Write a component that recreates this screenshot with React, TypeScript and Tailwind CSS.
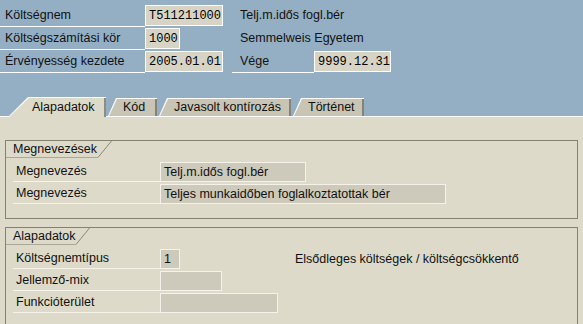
const sans = "font-['Liberation_Sans',Arial,sans-serif]";
const mono = "font-['Liberation_Mono','Courier_New',monospace]";

function HeaderField({ value, w }: { value: string; w: string }) {
  return (
    <div
      className={`${w} h-[21px] border border-white bg-[#d8d4c5] pl-[3px] flex items-center ${mono} text-[12px] text-black`}
    >
      {value}
    </div>
  );
}

function HeaderLabel({ text, w }: { text: string; w: string }) {
  return (
    <div className={`${w} h-[22px] border-b border-white pl-[5px] flex items-center`}>
      {text}
    </div>
  );
}

function Tab({
  label,
  width,
  active = false,
}: {
  label: string;
  width: string;
  active?: boolean;
}) {
  if (active) {
    return (
      <div
        className={`relative -mb-px h-[20px] ${width} bg-white [clip-path:polygon(0_100%,20px_0,100%_0,100%_100%)]`}
      >
        <div className="ml-px mt-px h-[19px] w-[calc(100%-1px)] bg-[#dddac9] border-r-2 border-[#8f8d80] [clip-path:polygon(0_100%,20px_0,100%_0,100%_100%)] flex items-center pl-[23px]">
          {label}
        </div>
      </div>
    );
  }
  return (
    <div
      className={`h-[18px] ${width} bg-white [clip-path:polygon(0_100%,8px_0,100%_0,100%_100%)]`}
    >
      <div className="ml-px mt-px h-[17px] w-[calc(100%-1px)] bg-[#c8c5b5] border-r-2 border-[#858376] [clip-path:polygon(0_100%,8px_0,100%_0,100%_100%)] flex items-center pl-[14px]">
        {label}
      </div>
    </div>
  );
}

function GroupTitle({ text, w }: { text: string; w: string }) {
  return (
    <div className="flex h-[17px]">
      <div className={`${w} h-full border-b border-[#a9a796] pl-[7px] flex items-center`}>
        {text}
      </div>
      <svg width="14" height="17" viewBox="0 0 14 17" className="block">
        <line x1="0" y1="16.5" x2="13.5" y2="0" stroke="#8a887a" strokeWidth="1" />
      </svg>
    </div>
  );
}

function Row({
  label,
  value = '',
  w,
  children,
}: {
  label: string;
  value?: string;
  w: string;
  children?: React.ReactNode;
}) {
  return (
    <div className="flex h-[22px] items-center">
      <div className="ml-[7px] w-[147px] h-[20px] border-b border-[#f4f2ea] pl-[3px] flex items-center">
        {label}
      </div>
      <div
        className={`${w} h-[20px] border border-[#f4f2ea] bg-[#cdcabb] pl-[3px] flex items-center`}
      >
        {value}
      </div>
      {children}
    </div>
  );
}

export default function App() {
  return (
    <div className={`w-[583px] h-[324px] overflow-hidden ${sans} text-[12.5px] text-[#111]`}>
      <div className="bg-[#94afc4] pt-[4px]">
        <div className="flex h-[23px] items-center">
          <HeaderLabel text="Költségnem" w="w-[145px]" />
          <HeaderField value="T511211000" w="w-[78px]" />
          <div className="pl-[17px]">Telj.m.idős fogl.bér</div>
        </div>
        <div className="flex h-[23px] items-center">
          <HeaderLabel text="Költségszámítási kör" w="w-[145px]" />
          <HeaderField value="1000" w="w-[35px]" />
          <div className="pl-[60px]">Semmelweis Egyetem</div>
        </div>
        <div className="flex h-[23px] items-center">
          <HeaderLabel text="Érvényesség kezdete" w="w-[145px]" />
          <HeaderField value="2005.01.01" w="w-[78px]" />
          <div className="ml-[9px] w-[82px] h-[22px] border-b border-white pl-[8px] flex items-center">
            Vége
          </div>
          <HeaderField value="9999.12.31" w="w-[77px]" />
        </div>
        <div className="mt-[23px] h-[21px] border-b border-white flex items-end pl-[8px] gap-[2px]">
          <Tab label="Alapadatok" width="w-[98px]" active />
          <Tab label="Kód" width="w-[49px]" />
          <Tab label="Javasolt kontírozás" width="w-[132px]" />
          <Tab label="Történet" width="w-[71px]" />
        </div>
      </div>

      <div className="bg-[#dddac9] pt-[23px] px-[5px] h-[220px]">
        <div className="border border-[#85836f] pb-[13px]">
          <GroupTitle text="Megnevezések" w="w-[92px]" />
          <div className="pt-[3px]">
            <Row label="Megnevezés" value="Telj.m.idős fogl.bér" w="w-[146px]" />
            <Row label="Megnevezés" value="Teljes munkaidőben foglalkoztatottak bér" w="w-[286px]" />
          </div>
        </div>

        <div className="mt-[8px] border border-[#85836f] pb-[20px]">
          <GroupTitle text="Alapadatok" w="w-[70px]" />
          <div className="pt-[3px]">
            <Row label="Költségnemtípus" value="1" w="w-[20px]">
              <div className="pl-[115px]">Elsődleges költségek / költségcsökkentő</div>
            </Row>
            <Row label="Jellemző-mix" w="w-[62px]" />
            <Row label="Funkcióterület" w="w-[118px]" />
          </div>
        </div>
      </div>
    </div>
  );
}
